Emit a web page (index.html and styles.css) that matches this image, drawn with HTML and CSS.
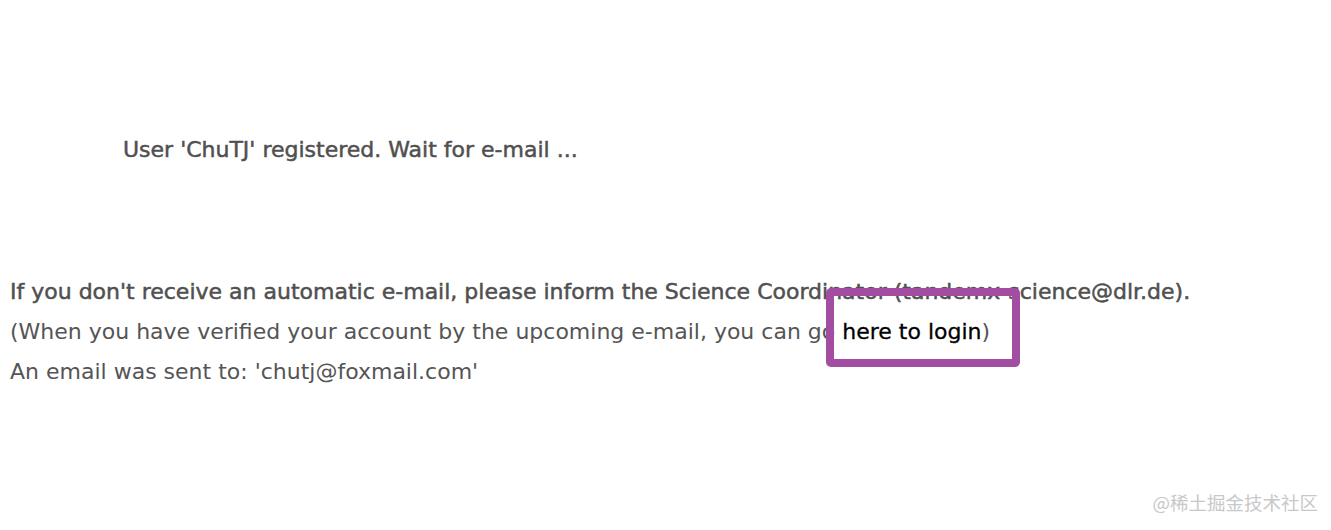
FILE: index.html
```html
<!DOCTYPE html>
<html>
<head>
<meta charset="utf-8">
<link rel="stylesheet" href="styles.css">
</head>
<body>
<div class="page">
  <div class="status">User 'ChuTJ' registered. Wait for e-mail ...</div>
  <div class="info">
    <p class="line strong">If you don't receive an automatic e-mail, please inform the Science Coordinator (tandemx-science@dlr.de).</p>
    <p class="line">(When you have verified your account by the upcoming e-mail, you can go <a class="login" href="#">here to login</a>)</p>
    <p class="line">An email was sent to: 'chutj@foxmail.com'</p>
    <div class="highlight"></div>
  </div>
</div>
<div class="watermark">@稀土掘金技术社区</div>
</body>
</html>
```
FILE: styles.css
```css
html, body {
  margin: 0;
  padding: 0;
  background: #fff;
}
body {
  width: 1331px;
  height: 530px;
  position: relative;
  overflow: hidden;
  font-family: "DejaVu Sans", sans-serif;
  color: #555;
  font-size: 22px;
}
.page {
  padding: 137px 10px 0 10px;
}
.status {
  padding-left: 113px;
  line-height: 26px;
  color: #505050;
  -webkit-text-stroke: 0.5px #505050;
}
.info {
  position: relative;
  margin-top: 109px;
}
.line {
  margin: 0;
  line-height: 40px;
}
.strong {
  color: #505050;
  -webkit-text-stroke: 0.5px #505050;
}
.login {
  color: #000;
  text-decoration: none;
  -webkit-text-stroke: 0.3px #000;
}
.highlight {
  position: absolute;
  left: 816px;
  top: 16px;
  width: 178px;
  height: 63px;
  border: 8px solid #a24ca2;
  border-radius: 5px;
}
.watermark {
  position: absolute;
  right: 13px;
  bottom: 18px;
  font-family: "Noto Sans CJK SC", sans-serif;
  font-size: 18.5px;
  color: #c8c8c8;
  line-height: 20px;
}
```
